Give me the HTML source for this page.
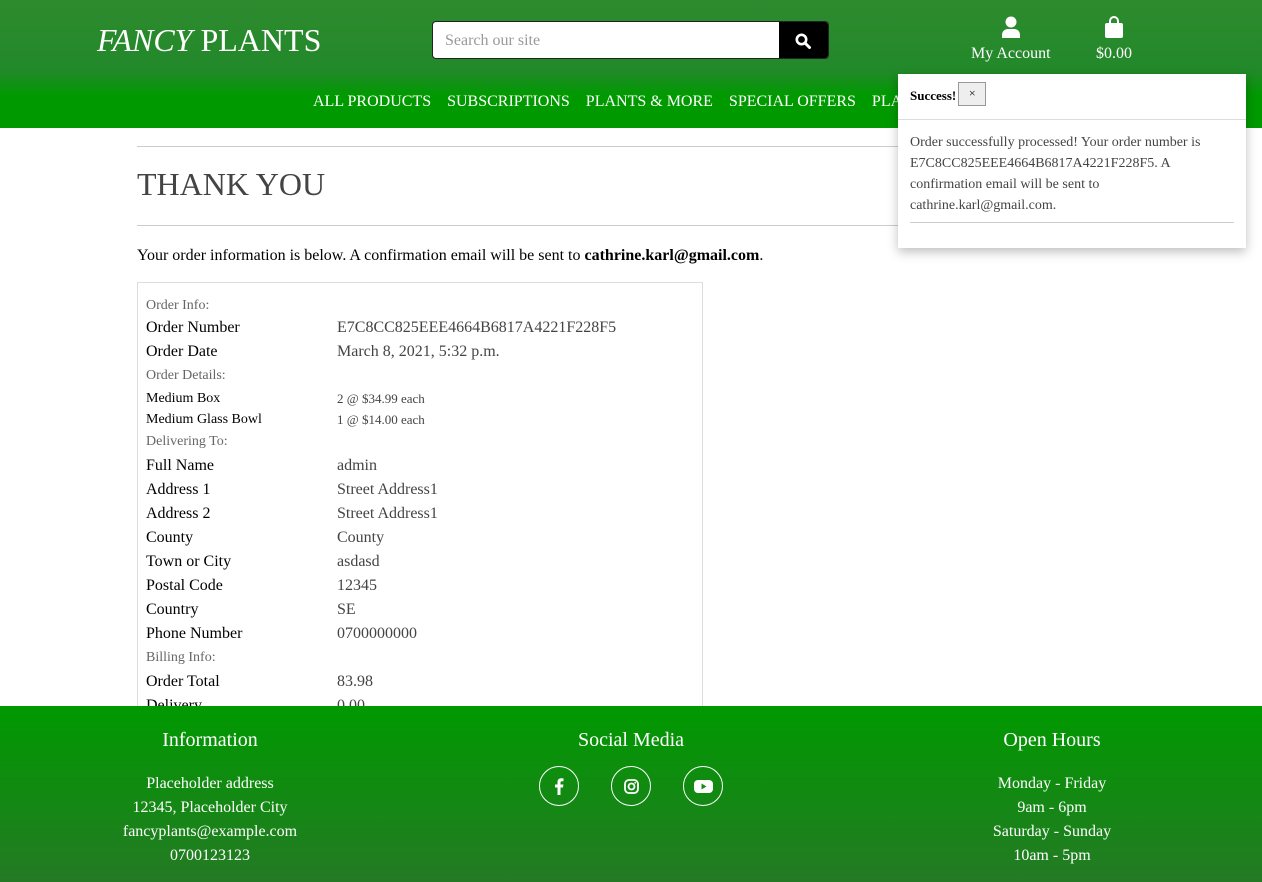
<!DOCTYPE html>
<html><head><meta charset="utf-8"><style>
*{margin:0;padding:0;box-sizing:border-box}
body{width:1262px;height:882px;overflow:hidden;font-family:"Liberation Serif",serif;background:#fff;position:relative}
.hdr{position:absolute;left:0;top:0;width:1262px;height:128px;background:linear-gradient(#2e8a2e 0%,#22892a 55%,#009a00 75%,#009900 100%)}
.logo{position:absolute;left:97px;top:22px;color:#fff;font-size:32px}
.search{position:absolute;left:432px;top:21px;width:397px;height:38px;border:1px solid #222;border-radius:4px;background:#fff;overflow:hidden}
.search span{position:absolute;left:12px;top:10px;color:#999;font-size:16px}
.search .b{position:absolute;right:0;top:0;width:49px;height:38px;background:#000}
.acc{position:absolute;top:16px;color:#fff;font-size:16px;text-align:center;line-height:20px}
.nav{position:absolute;top:93px;left:313px;color:#fff;font-size:16px;white-space:nowrap}
.nav span{margin-right:16px}
.main{position:absolute;left:137px;top:146px;width:988px;border-top:1px solid #ccc}
h1{font-weight:normal;font-size:32px;color:#444;margin-top:19px;padding-bottom:22px;border-bottom:1px solid #ccc}
.intro{font-size:16px;margin-top:21px}
.box{position:absolute;left:137px;top:282px;width:566px;height:440px;border:1px solid #ddd;padding:13px 8px}
.r{display:flex;height:24px;align-items:center;font-size:16px}
.r b{font-weight:normal;width:191px;color:#000}
.r i{font-style:normal;color:#444}
.s{font-size:14px;color:#666;height:24px;line-height:24px}
.sm{display:flex;height:21px;font-size:14px;align-items:center}
.sm b{font-weight:normal;width:191px}.sm i{font-style:normal;color:#444;font-size:13px}
.ft{position:absolute;left:0;top:706px;width:1262px;height:176px;background:linear-gradient(#009900,#247a24);color:#fff;text-align:center}
.col{position:absolute;top:22px;width:300px;font-size:16px;line-height:24px}
.col h3{font-weight:normal;font-size:20px;margin-bottom:20px}
.soc{display:inline-block;width:40px;height:40px;border:1px solid #fff;border-radius:50%;margin:0 16px;vertical-align:top;position:relative}
.toast{position:absolute;left:898px;top:74px;width:348px;height:174px;background:#fff;box-shadow:0 4px 10px rgba(0,0,0,.25)}
.th{height:46px;border-bottom:1px solid #ddd;padding:14px 12px;font-size:13px;font-weight:bold}
.x{display:inline-block;width:28px;height:24px;border:1px solid #999;background:#eee;font-weight:normal;font-size:12px;text-align:center;line-height:20px;vertical-align:middle;margin-top:-6px;margin-left:2px}
.tb{margin:12px 12px 0;font-size:14px;line-height:21px;color:#444;border-bottom:1px solid #ccc;padding-bottom:6px}
</style></head><body>
<div class="hdr">
<div class="logo"><i>FANCY</i> PLANTS</div>
<div class="search"><span>Search our site</span><div class="b"><svg style="position:absolute;left:16px;top:11px" width="16" height="16" viewBox="0 0 16 16"><circle cx="6.5" cy="6.5" r="4.7" fill="none" stroke="#fff" stroke-width="2.6"/><path d="M10 10l4.5 4.5" stroke="#fff" stroke-width="3" stroke-linecap="round"/></svg></div></div>
<div class="acc" style="left:971px"><svg width="20" height="22" viewBox="0 0 20 22"><circle cx="10" cy="6" r="5.5" fill="#fff"/><path d="M1 22v-3c0-4 3-6 6-6h6c3 0 6 2 6 6v3z" fill="#fff"/></svg><br>My Account</div>
<div class="acc" style="left:1096px"><svg width="20" height="22" viewBox="0 0 20 22"><path d="M6 8V5a4 4 0 0 1 8 0v3" fill="none" stroke="#fff" stroke-width="2"/><rect x="1" y="7" width="18" height="15" rx="2" fill="#fff"/></svg><br>$0.00</div>
<div class="nav"><span>ALL PRODUCTS</span><span>SUBSCRIPTIONS</span><span>PLANTS &amp; MORE</span><span>SPECIAL OFFERS</span><span>PLANT CARE</span></div>
</div>
<div class="main"><h1>THANK YOU</h1>
<p class="intro">Your order information is below. A confirmation email will be sent to <b>cathrine.karl@gmail.com</b>.</p></div>
<div class="box">
<div class="s" style="height:20px;line-height:20px">Order Info:</div>
<div class="r"><b>Order Number</b><i>E7C8CC825EEE4664B6817A4221F228F5</i></div>
<div class="r"><b>Order Date</b><i>March 8, 2021, 5:32 p.m.</i></div>
<div class="s">Order Details:</div>
<div class="sm"><b>Medium Box</b><i>2 @ $34.99 each</i></div>
<div class="sm"><b>Medium Glass Bowl</b><i>1 @ $14.00 each</i></div>
<div class="s">Delivering To:</div>
<div class="r"><b>Full Name</b><i>admin</i></div>
<div class="r"><b>Address 1</b><i>Street Address1</i></div>
<div class="r"><b>Address 2</b><i>Street Address1</i></div>
<div class="r"><b>County</b><i>County</i></div>
<div class="r"><b>Town or City</b><i>asdasd</i></div>
<div class="r"><b>Postal Code</b><i>12345</i></div>
<div class="r"><b>Country</b><i>SE</i></div>
<div class="r"><b>Phone Number</b><i>0700000000</i></div>
<div class="s">Billing Info:</div>
<div class="r"><b>Order Total</b><i>83.98</i></div>
<div class="r"><b>Delivery</b><i>0.00</i></div>
</div>
<div class="ft">
<div class="col" style="left:60px"><h3>Information</h3>Placeholder address<br>12345, Placeholder City<br>fancyplants@example.com<br>0700123123</div>
<div class="col" style="left:481px"><h3>Social Media</h3>
<span class="soc" style="margin-top:-6px"><svg style="position:absolute;left:14px;top:11px" width="10" height="17" viewBox="0 0 10 17"><path d="M6.5 17V9.5h2.5l.4-3H6.5V4.7c0-.9.3-1.5 1.5-1.5h1.5V.5C9.2.4 8.3.3 7.3.3 5 .3 3.5 1.7 3.5 4.2V6.5H1v3h2.5V17z" fill="#fff"/></svg></span><span class="soc" style="margin-top:-6px"><svg style="position:absolute;left:12px;top:12px" width="15" height="15" viewBox="0 0 15 15"><rect x="1" y="1" width="13" height="13" rx="4" fill="none" stroke="#fff" stroke-width="1.8"/><circle cx="7.5" cy="7.5" r="3" fill="none" stroke="#fff" stroke-width="1.8"/><circle cx="11.2" cy="3.8" r=".9" fill="#fff"/></svg></span><span class="soc" style="margin-top:-6px"><svg style="position:absolute;left:10px;top:13px" width="19" height="13" viewBox="0 0 19 13"><rect x="0" y="0" width="19" height="13" rx="4" fill="#fff"/><path d="M7.5 3.5v6l5-3z" fill="#1a8a1a"/></svg></span></div>
<div class="col" style="left:902px"><h3>Open Hours</h3>Monday - Friday<br>9am - 6pm<br>Saturday - Sunday<br>10am - 5pm</div>
</div>
<div class="toast"><div class="th">Success!<span class="x">×</span></div>
<div class="tb">Order successfully processed! Your order number is E7C8CC825EEE4664B6817A4221F228F5. A confirmation email will be sent to cathrine.karl@gmail.com.</div></div>
</body></html>
